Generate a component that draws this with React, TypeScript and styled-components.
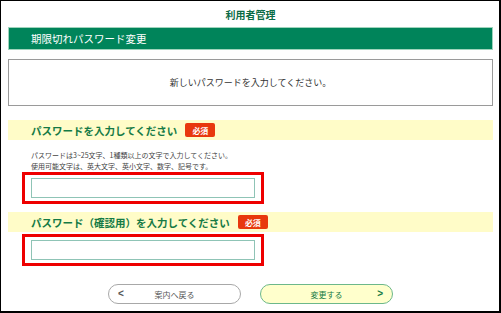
import React from "react";
import styled, { createGlobalStyle } from "styled-components";

const GlobalStyle = createGlobalStyle`
  html, body {
    margin: 0;
    padding: 0;
    background: #ffffff;
  }
  body {
    font-family: "Noto Sans CJK JP", "Noto Sans", sans-serif;
  }
`;

type FieldProps = {
  label: string;
  top: number;
  gap: number;
  children?: React.ReactNode;
};

const PasswordField: React.FC<FieldProps> = (props) => {
  return (
    <>
      <Band $top={props.top}>
        <span className="band__label">{ props.label }</span>
        <Badge>必須</Badge>
      </Band>
      { props.children }
      <Highlight $top={props.gap}>
        <Input type="password" />
      </Highlight>
    </>
  );
};

const App: React.FC = () => {
  return (
    <>
      <GlobalStyle />
      <Frame>
        <PageTitle>利用者管理</PageTitle>
        <HeaderBar>期限切れパスワード変更</HeaderBar>
        <MessageBox>新しいパスワードを入力してください。</MessageBox>

        <PasswordField label="パスワードを入力してください" top={14} gap={0}>
          <HelpText>
            パスワードは3~25文字、1種類以上の文字で入力してください。<br />
            使用可能文字は、英大文字、英小文字、数字、記号です。
          </HelpText>
        </PasswordField>

        <PasswordField label="パスワード（確認用）を入力してください" top={8} gap={2} />

        <ButtonRow>
          <NavButton $primary={false}>
            <span className="button__arrow">&lt;</span>
            <span className="button__label">案内へ戻る</span>
          </NavButton>
          <NavButton $primary={true}>
            <span className="button__label">変更する</span>
            <span className="button__arrow">&gt;</span>
          </NavButton>
        </ButtonRow>
      </Frame>
    </>
  );
};

const Frame = styled.div`
  box-sizing: border-box;
  width: 501px;
  height: 313px;
  border: 1px solid #000000;
  border-right-width: 2px;
  border-bottom-width: 2px;
  padding: 0 6px 0 7px;
  display: flex;
  flex-direction: column;
  overflow: hidden;
`;

const PageTitle = styled.div`
  height: 26px;
  display: flex;
  align-items: center;
  justify-content: center;
  font-size: 10px;
  font-weight: bold;
  color: #0a6b45;
`;

const HeaderBar = styled.div`
  box-sizing: border-box;
  height: 23px;
  background: #00845a;
  border: 1px solid #9fd4bc;
  color: #ffffff;
  font-size: 10.5px;
  display: flex;
  align-items: center;
  padding-left: 22px;
`;

const MessageBox = styled.div`
  box-sizing: border-box;
  margin-top: 9px;
  height: 47px;
  border: 1px solid #9a9a9a;
  display: flex;
  align-items: center;
  justify-content: center;
  font-size: 9px;
  color: #333333;
`;

const Band = styled.div<{ $top: number }>`
  margin-top: ${props => props.$top}px;
  height: 20px;
  background: #fffcc8;
  display: flex;
  align-items: center;
  padding-left: 23px;
  gap: 8px;

  .band__label {
    font-size: 10.5px;
    font-weight: bold;
    color: #157a45;
  }
`;

const Badge = styled.span`
  display: inline-flex;
  align-items: center;
  justify-content: center;
  height: 14px;
  padding: 0 7px;
  border-radius: 2px;
  background: #e8380d;
  color: #ffffff;
  font-size: 8px;
  font-weight: bold;
`;

const HelpText = styled.p`
  margin: 10px 0 0 23px;
  font-size: 7px;
  line-height: 11px;
  color: #444444;
`;

const Highlight = styled.div<{ $top: number }>`
  box-sizing: border-box;
  margin: ${props => props.$top}px 0 0 14px;
  width: 242px;
  height: 32px;
  border: 3px solid #ee0000;
  padding: 3px 6px;
`;

const Input = styled.input`
  box-sizing: border-box;
  display: block;
  width: 100%;
  height: 20px;
  margin: 0;
  border: 1px solid #8fc4b6;
  background: #ffffff;
  outline: none;
`;

const ButtonRow = styled.div`
  margin-top: 18px;
  display: flex;
  justify-content: center;
  gap: 19px;
`;

const NavButton = styled.div<{ $primary: boolean }>`
  box-sizing: border-box;
  position: relative;
  width: 133px;
  height: 20px;
  border-radius: 10px;
  border: 1px solid ${props => props.$primary ? "#6cb88a" : "#a8a8a8"};
  background: ${props => props.$primary ? "#ffffcc" : "#ffffff"};
  display: flex;
  align-items: center;
  justify-content: center;
  color: ${props => props.$primary ? "#157a45" : "#555555"};

  .button__label {
    font-size: 8px;
  }

  .button__arrow {
    position: absolute;
    top: 50%;
    transform: translateY(-55%);
    font-family: "Liberation Sans", sans-serif;
    font-size: 10px;
    font-weight: bold;
    ${props => props.$primary ? "right: 9px;" : "left: 9px;"}
  }
`;

export default App;
